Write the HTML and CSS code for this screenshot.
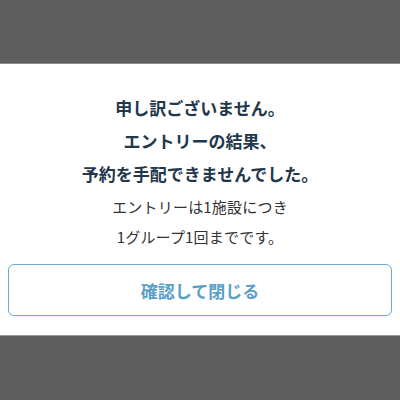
FILE: index.html
```html
<!DOCTYPE html>
<html lang="ja">
<head>
    <meta charset="UTF-8">
    <meta name="viewport" content="width=device-width, initial-scale=1.0">
    <title>エントリー結果</title>
    <link rel="stylesheet" href="styles.css">
</head>
<body>
    <div class="backdrop top"></div>
    <div class="dialog">
        <h2 class="title">申し訳ございません。<br>エントリーの結果、<br>予約を手配できませんでした。</h2>
        <p class="note">エントリーは1施設につき<br>1グループ1回までです。</p>
        <button class="close-btn">確認して閉じる</button>
    </div>
    <div class="backdrop bottom"></div>
</body>
</html>
```

FILE: styles.css
```css
html, body {
    margin: 0;
    height: 400px;
    overflow: hidden;
}
body {
    display: flex;
    flex-direction: column;
    font-family: "Noto Sans CJK JP", "Noto Sans", sans-serif;
    background: #5e5e5e;
}
.backdrop {
    background: #5e5e5e;
}
.backdrop.top {
    height: 63px;
    border-bottom: 1px solid #8a8a8a;
}
.backdrop.bottom {
    flex: 1;
    border-top: 1px solid #9a9a9a;
}
.dialog {
    background: #fff;
    padding: 27px 8px 19px;
    text-align: center;
}
.title {
    margin: 0;
    font-size: 17px;
    line-height: 33px;
    font-weight: bold;
    color: #23374b;
}
.note {
    margin: 2px 0 0;
    font-size: 15px;
    line-height: 30px;
    letter-spacing: 0.2px;
    color: #333;
}
.close-btn {
    display: block;
    width: 100%;
    height: 52px;
    margin-top: 12px;
    background: #fff;
    border: 1.5px solid #66aed2;
    border-radius: 6px;
    font-family: inherit;
    font-size: 17px;
    font-weight: bold;
    color: #5b9fc8;
    cursor: pointer;
}
```
